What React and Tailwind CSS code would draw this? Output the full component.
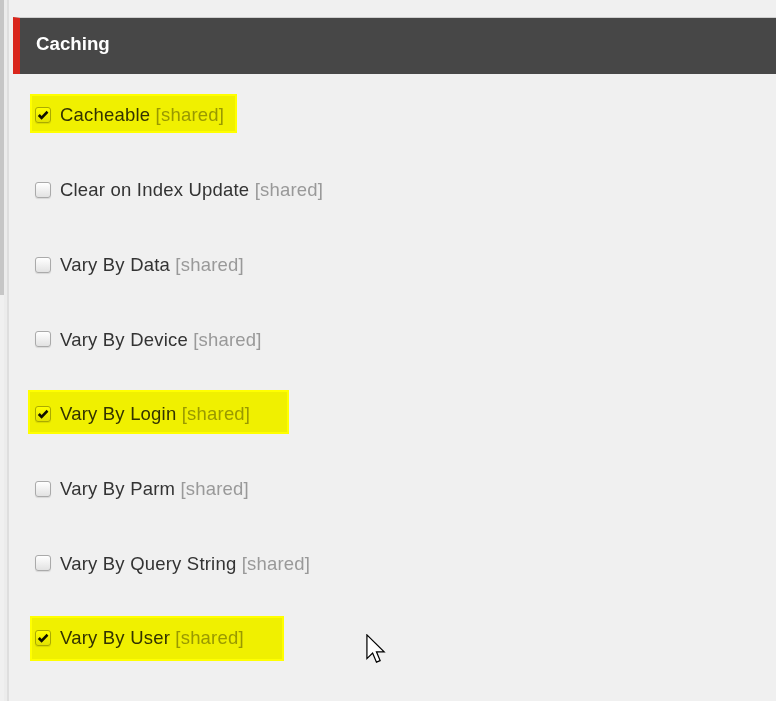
import React from 'react';

const ROWS = [
  { label: 'Cacheable', checked: true, hl: 'left-[-5px] right-[-13px] top-[-7px] bottom-[-4px]' },
  { label: 'Clear on Index Update' },
  { label: 'Vary By Data' },
  { label: 'Vary By Device' },
  { label: 'Vary By Login', checked: true, hl: 'left-[-7px] right-[-39px] top-[-10px] bottom-[-6px]' },
  { label: 'Vary By Parm' },
  { label: 'Vary By Query String' },
  { label: 'Vary By User', checked: true, hl: 'left-[-5px] right-[-40px] top-[-8px] bottom-[-9px]' },
];

function Checkbox({ checked }) {
  return (
    <span className="w-[16px] h-[16px] rounded-[3px] border border-[#aaaaaa] bg-gradient-to-b from-white to-[#e2e2e2] flex items-center justify-center shrink-0 shadow-[0_1px_1px_rgba(0,0,0,0.1)]">
      {checked && (
        <svg width="12" height="11" viewBox="0 0 12 11">
          <path d="M0.8 6 L2.8 4 L4.6 5.9 L9.6 0.8 L11.4 2.7 L4.6 9.8 Z" fill="#111" />
        </svg>
      )}
    </span>
  );
}

export default function App() {
  return (
    <div className="relative w-[776px] h-[701px] overflow-hidden bg-[#f0f0f0] flex" style={{ fontFamily: '"Liberation Sans", Arial, sans-serif' }}>
      {/* left edge */}
      <div className="w-[4px] shrink-0">
        <div className="h-[295px] bg-[#c6c6c6]" />
      </div>
      <div className="w-[3px] shrink-0 bg-[#ececec]" />
      <div className="w-[2px] shrink-0 bg-[#dedede]" />
      <div className="w-[4px] shrink-0" />

      <div className="flex-1 flex flex-col pt-[17px]">
        <div className="h-[57px] border-t border-[#cfcfcf] bg-[#474747] flex items-center border-l-[7px] border-l-[#d9261c] pl-[16px] pb-[3px]">
          <span className="text-white font-bold text-[18.7px]">Caching</span>
        </div>

        <div className="pt-[4px] pl-[22px]">
          {ROWS.map((r) => (
            <div key={r.label} className="h-[74.7px] flex items-center">
              <div className="relative flex items-center gap-[9px]">
                <Checkbox checked={r.checked} />
                <span className="text-[18.5px] tracking-[0.2px] text-[#333]">
                  {r.label} <span className="text-[#999]">[shared]</span>
                </span>
                {r.hl && (
                  <div className={`absolute ${r.hl} border-2 border-[#ffff00] pointer-events-none`}>
                    <div className="w-full h-full bg-[#ffff00] mix-blend-multiply" />
                  </div>
                )}
              </div>
            </div>
          ))}
        </div>
      </div>

      {/* mouse cursor */}
      <svg className="absolute left-[366px] top-[634px]" width="20" height="30" viewBox="0 0 13 19.5">
        <path d="M0.6 0.6 L0.6 16 L4.3 12.4 L6.8 18.3 L9.2 17.3 L6.8 11.6 L11.8 11.6 Z" fill="#fff" stroke="#000" strokeWidth="0.8" />
      </svg>
    </div>
  );
}
